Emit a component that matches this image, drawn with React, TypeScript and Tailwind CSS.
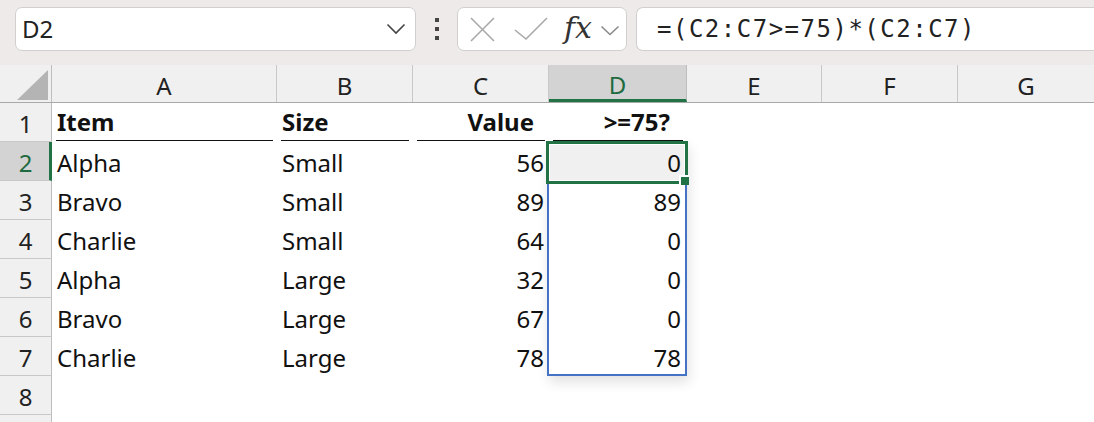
const columns = [
  { key: 'A', width: 'w-[225px]' },
  { key: 'B', width: 'w-[136px]' },
  { key: 'C', width: 'w-[136px]' },
  { key: 'D', width: 'w-[138px]' },
  { key: 'E', width: 'w-[135px]' },
  { key: 'F', width: 'w-[136px]' },
  { key: 'G', width: 'w-[137px]' },
];

const rows = [
  { item: 'Alpha', size: 'Small', value: 56, result: 0 },
  { item: 'Bravo', size: 'Small', value: 89, result: 89 },
  { item: 'Charlie', size: 'Small', value: 64, result: 0 },
  { item: 'Alpha', size: 'Large', value: 32, result: 0 },
  { item: 'Bravo', size: 'Large', value: 67, result: 0 },
  { item: 'Charlie', size: 'Large', value: 78, result: 78 },
];

function Toolbar() {
  return (
    <div className="h-[65px] bg-[#eeeae9] flex items-start pt-[7px] pl-[15px]">
      <div className="w-[401px] h-[44px] bg-white border border-[#d2d0cf] rounded-[7px] flex items-center justify-between pl-[6px] pr-[9px]">
        <span className="text-[24px] text-[#222] leading-none">D2</span>
        <svg width="20" height="12" viewBox="0 0 20 12" fill="none">
          <path d="M1.5 1.5 L10 10 L18.5 1.5" stroke="#444" strokeWidth="1.6" />
        </svg>
      </div>
      <div className="w-[41px] h-[44px] flex flex-col items-center justify-center gap-[5px]">
        <span className="w-[4px] h-[4px] bg-[#444]" />
        <span className="w-[4px] h-[4px] bg-[#444]" />
        <span className="w-[4px] h-[4px] bg-[#444]" />
      </div>
      <div className="w-[170px] h-[44px] bg-white border border-[#d2d0cf] rounded-[7px] flex items-center pl-[12px]">
        <svg width="25" height="25" viewBox="0 0 25 25" fill="none">
          <path d="M1 1 L24 24 M24 1 L1 24" stroke="#a9a9a9" strokeWidth="1.6" />
        </svg>
        <svg width="34" height="24" viewBox="0 0 34 24" fill="none" className="ml-[19px]">
          <path d="M1 13 L12 22 L33 1" stroke="#a9a9a9" strokeWidth="1.6" />
        </svg>
        <span className="ml-[16px] text-[30px] leading-none italic text-[#333] pb-[2px]" style={{ fontFamily: '"DejaVu Serif", "Liberation Serif", serif' }}>
          fx
        </span>
        <svg width="20" height="11" viewBox="0 0 20 11" fill="none" className="ml-[8px] mt-[3px]">
          <path d="M1.5 1.5 L10 9.5 L18.5 1.5" stroke="#8a8a8a" strokeWidth="1.6" />
        </svg>
      </div>
      <div className="flex-1 ml-[9px] h-[44px] bg-white border border-r-0 border-[#d2d0cf] rounded-l-[7px] flex items-center pl-[20px]">
        <span
          className="text-[24px] text-[#222] leading-none tracking-[1.5px]"
          style={{ fontFamily: '"DejaVu Sans Mono", "Liberation Mono", monospace' }}
        >
          =(C2:C7&gt;=75)*(C2:C7)
        </span>
      </div>
    </div>
  );
}

function ColumnHeaders() {
  return (
    <div className="flex h-[38px] bg-[#f0f0f0] border-b border-[#a9a9a9]">
      <div className="w-[52px] shrink-0 border-r border-[#bdbdbd] flex items-end justify-end pr-[3px] pb-[2px]">
        <svg width="31" height="30" viewBox="0 0 31 30">
          <polygon points="31,0 31,30 0,30" fill="#b4b4b4" />
        </svg>
      </div>
      {columns.map((c) =>
        c.key === 'D' ? (
          <div
            key={c.key}
            className={`${c.width} shrink-0 bg-[#d3d3d3] border-b-[3px] border-[#217346] border-r border-r-[#bdbdbd] flex items-center justify-center pt-[6px] text-[24px] text-[#1e6b3f]`}
          >
            {c.key}
          </div>
        ) : (
          <div
            key={c.key}
            className={`${c.width} shrink-0 border-r border-[#c8c8c8] flex items-center justify-center pt-[4px] text-[24px] text-[#222]`}
          >
            {c.key}
          </div>
        )
      )}
    </div>
  );
}

function RowHeader({ n, selected }: { n?: number; selected?: boolean }) {
  return (
    <div
      className={
        selected
          ? 'w-[52px] shrink-0 h-full bg-[#d3d3d3] border-r-[3px] border-[#217346] border-b border-b-[#c8c8c8] flex items-center justify-center pl-[2px] pt-[3px] text-[24px] text-[#1e6b3f]'
          : 'w-[52px] shrink-0 h-full bg-[#f0f0f0] border-r border-[#bdbdbd] border-b border-b-[#c8c8c8] flex items-center justify-center pt-[3px] text-[24px] text-[#222]'
      }
    >
      {n}
    </div>
  );
}

function HeaderCell({ width, label, align, extra }: { width: string; label: string; align: 'left' | 'right'; extra?: string }) {
  return (
    <div className={`${width} shrink-0 px-[4px]`}>
      <div
        className={`h-[38px] border-b-[1.5px] border-[#111] flex items-center font-bold text-[24px] ${align === 'right' ? 'justify-end' : 'justify-start'} ${extra ?? ''}`}
      >
        {label}
      </div>
    </div>
  );
}

export default function App() {
  return (
    <div
      className="w-[1094px] h-[422px] overflow-hidden bg-white text-[#111]"
      style={{ fontFamily: '"Noto Sans", "Open Sans", sans-serif' }}
    >
      <Toolbar />
      <ColumnHeaders />
      <div className="relative">
        <div className="flex h-[39px]">
          <RowHeader n={1} />
          <HeaderCell width="w-[225px]" label="Item" align="left" extra="pl-[1px]" />
          <HeaderCell width="w-[136px]" label="Size" align="left" extra="pl-[1px]" />
          <HeaderCell width="w-[136px]" label="Value" align="right" extra="pr-[11px]" />
          <HeaderCell width="w-[138px]" label=">=75?" align="right" extra="pr-[13px]" />
        </div>
        {rows.map((r, i) => (
          <div key={i} className="flex h-[39px] text-[24px]">
            <RowHeader n={i + 2} selected={i === 0} />
            <div className="w-[225px] shrink-0 pl-[5px] pt-[3px] flex items-center">{r.item}</div>
            <div className="w-[136px] shrink-0 pl-[5px] pt-[3px] flex items-center">{r.size}</div>
            <div className="w-[136px] shrink-0 pr-[5px] pt-[3px] flex items-center justify-end">{r.value}</div>
            <div className="w-[138px] shrink-0 pr-[6px] pt-[3px] flex items-center justify-end relative z-10">{r.result}</div>
          </div>
        ))}
        <div className="flex h-[39px]">
          <RowHeader n={8} />
        </div>
        <div className="flex h-[39px]">
          <RowHeader />
        </div>

        {/* spill range outline */}
        <div className="absolute left-[547px] top-[38px] w-[140px] h-[235px] border-[2px] border-[#4472c4] shadow-[2px_6px_12px_rgba(0,0,0,0.12)] pointer-events-none" />
        {/* active cell */}
        <div className="absolute left-[546px] top-[38px] w-[142px] h-[43px] border-[3px] border-[#217346] pointer-events-none">
          <div className="w-full h-full border border-white bg-[#f0f0f0]" />
        </div>
        <div className="absolute left-[679px] top-[72px] w-[10px] h-[10px] bg-white z-20 pointer-events-none">
          <div className="ml-[2px] mt-[2px] w-[8px] h-[8px] bg-[#217346]" />
        </div>
      </div>
    </div>
  );
}
